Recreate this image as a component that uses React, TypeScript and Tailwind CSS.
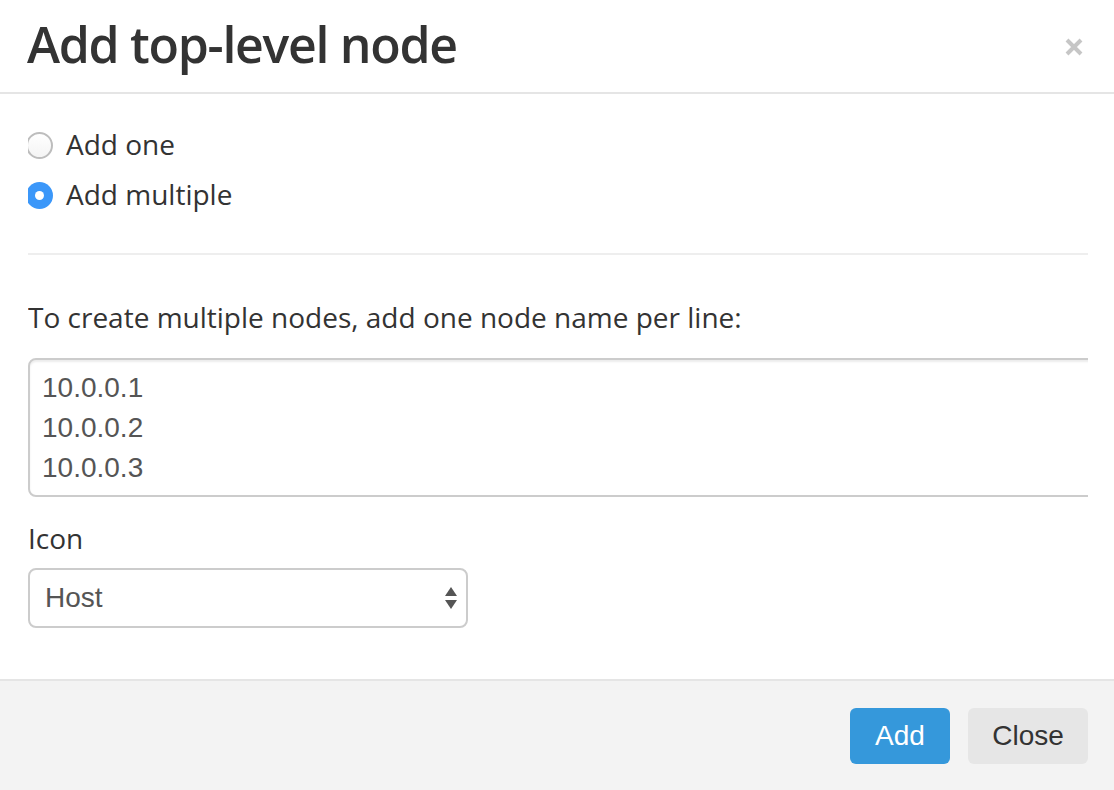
import React from "react";

export default function App() {
  return (
    <div className="w-[1114px] h-[790px] overflow-hidden bg-white text-[#333] [font-family:'Open_Sans',sans-serif]">
      {/* Header */}
      <div className="h-[94px] border-b-2 border-[#e5e5e5] flex items-center justify-between pl-[27px] pr-[30px]">
        <h4 className="text-[50px] leading-none font-semibold tracking-[-1.3px] pb-[4px]">Add top-level node</h4>
        <svg width="20" height="20" viewBox="0 0 20 20" className="mt-[2px]">
          <path d="M3 3 L17 17 M17 3 L3 17" stroke="#c6c6c6" strokeWidth="4" strokeLinecap="butt" />
        </svg>
      </div>

      {/* Body */}
      <div className="pl-[28px] pr-[26px] pt-[25px] pb-[51px]">
        <div className="overflow-hidden">
          <label className="flex items-center h-[50px] text-[28px]">
            <span className="w-[27px] h-[27px] rounded-full border-2 border-[#bdbdbd] bg-gradient-to-b from-white to-[#f4f4f4] ml-[-2px] mr-[13px] shrink-0 mt-[2px]" />
            <span>Add one</span>
          </label>
          <label className="flex items-center h-[50px] text-[28px]">
            <span className="w-[27px] h-[27px] rounded-full bg-[#3b97f9] flex items-center justify-center ml-[-2px] mr-[13px] shrink-0 mt-[2px]">
              <span className="w-[9px] h-[9px] rounded-full bg-white" />
            </span>
            <span>Add multiple</span>
          </label>

          <div className="mt-[34px] h-[2px] bg-[#eeeeee]" />

          <p className="mt-[37px] text-[28px] leading-[50px]">To create multiple nodes, add one node name per line:</p>

          <div className="mt-[16px] w-[1100px] h-[139px] border-2 border-[#cccccc] rounded-[8px] shadow-[inset_0_2px_2px_rgba(0,0,0,0.075)] pl-[12px] pt-[8px] text-[28px] leading-[40px] text-[#555] [font-family:'Liberation_Sans',Arial,sans-serif]">
            <div>10.0.0.1</div>
            <div>10.0.0.2</div>
            <div>10.0.0.3</div>
          </div>

          <div className="mt-[16px] text-[28px] leading-[50px]">Icon</div>

          <div className="mt-[5px] w-[440px] h-[60px] border-2 border-[#cccccc] rounded-[8px] flex items-center justify-between pl-[15px] pr-[8px] text-[28px] text-[#555] [font-family:'Liberation_Sans',Arial,sans-serif]">
            <span className="mt-[-1px]">Host</span>
            <svg width="14" height="26" viewBox="0 0 14 26">
              <path d="M7 2 L13 11 L1 11 Z" fill="#555" />
              <path d="M1 15 L13 15 L7 24 Z" fill="#555" />
            </svg>
          </div>
        </div>
      </div>

      {/* Footer */}
      <div className="border-t-2 border-[#e5e5e5] bg-[#f3f3f3] h-[200px] flex justify-end items-start gap-[18px] pt-[27px] pr-[26px] [font-family:'Liberation_Sans',Arial,sans-serif] text-[28px]">
        <button className="w-[100px] h-[56px] rounded-[6px] bg-[#3598db] text-white">Add</button>
        <button className="w-[120px] h-[56px] rounded-[6px] bg-[#e6e6e6] text-[#333]">Close</button>
      </div>
    </div>
  );
}
